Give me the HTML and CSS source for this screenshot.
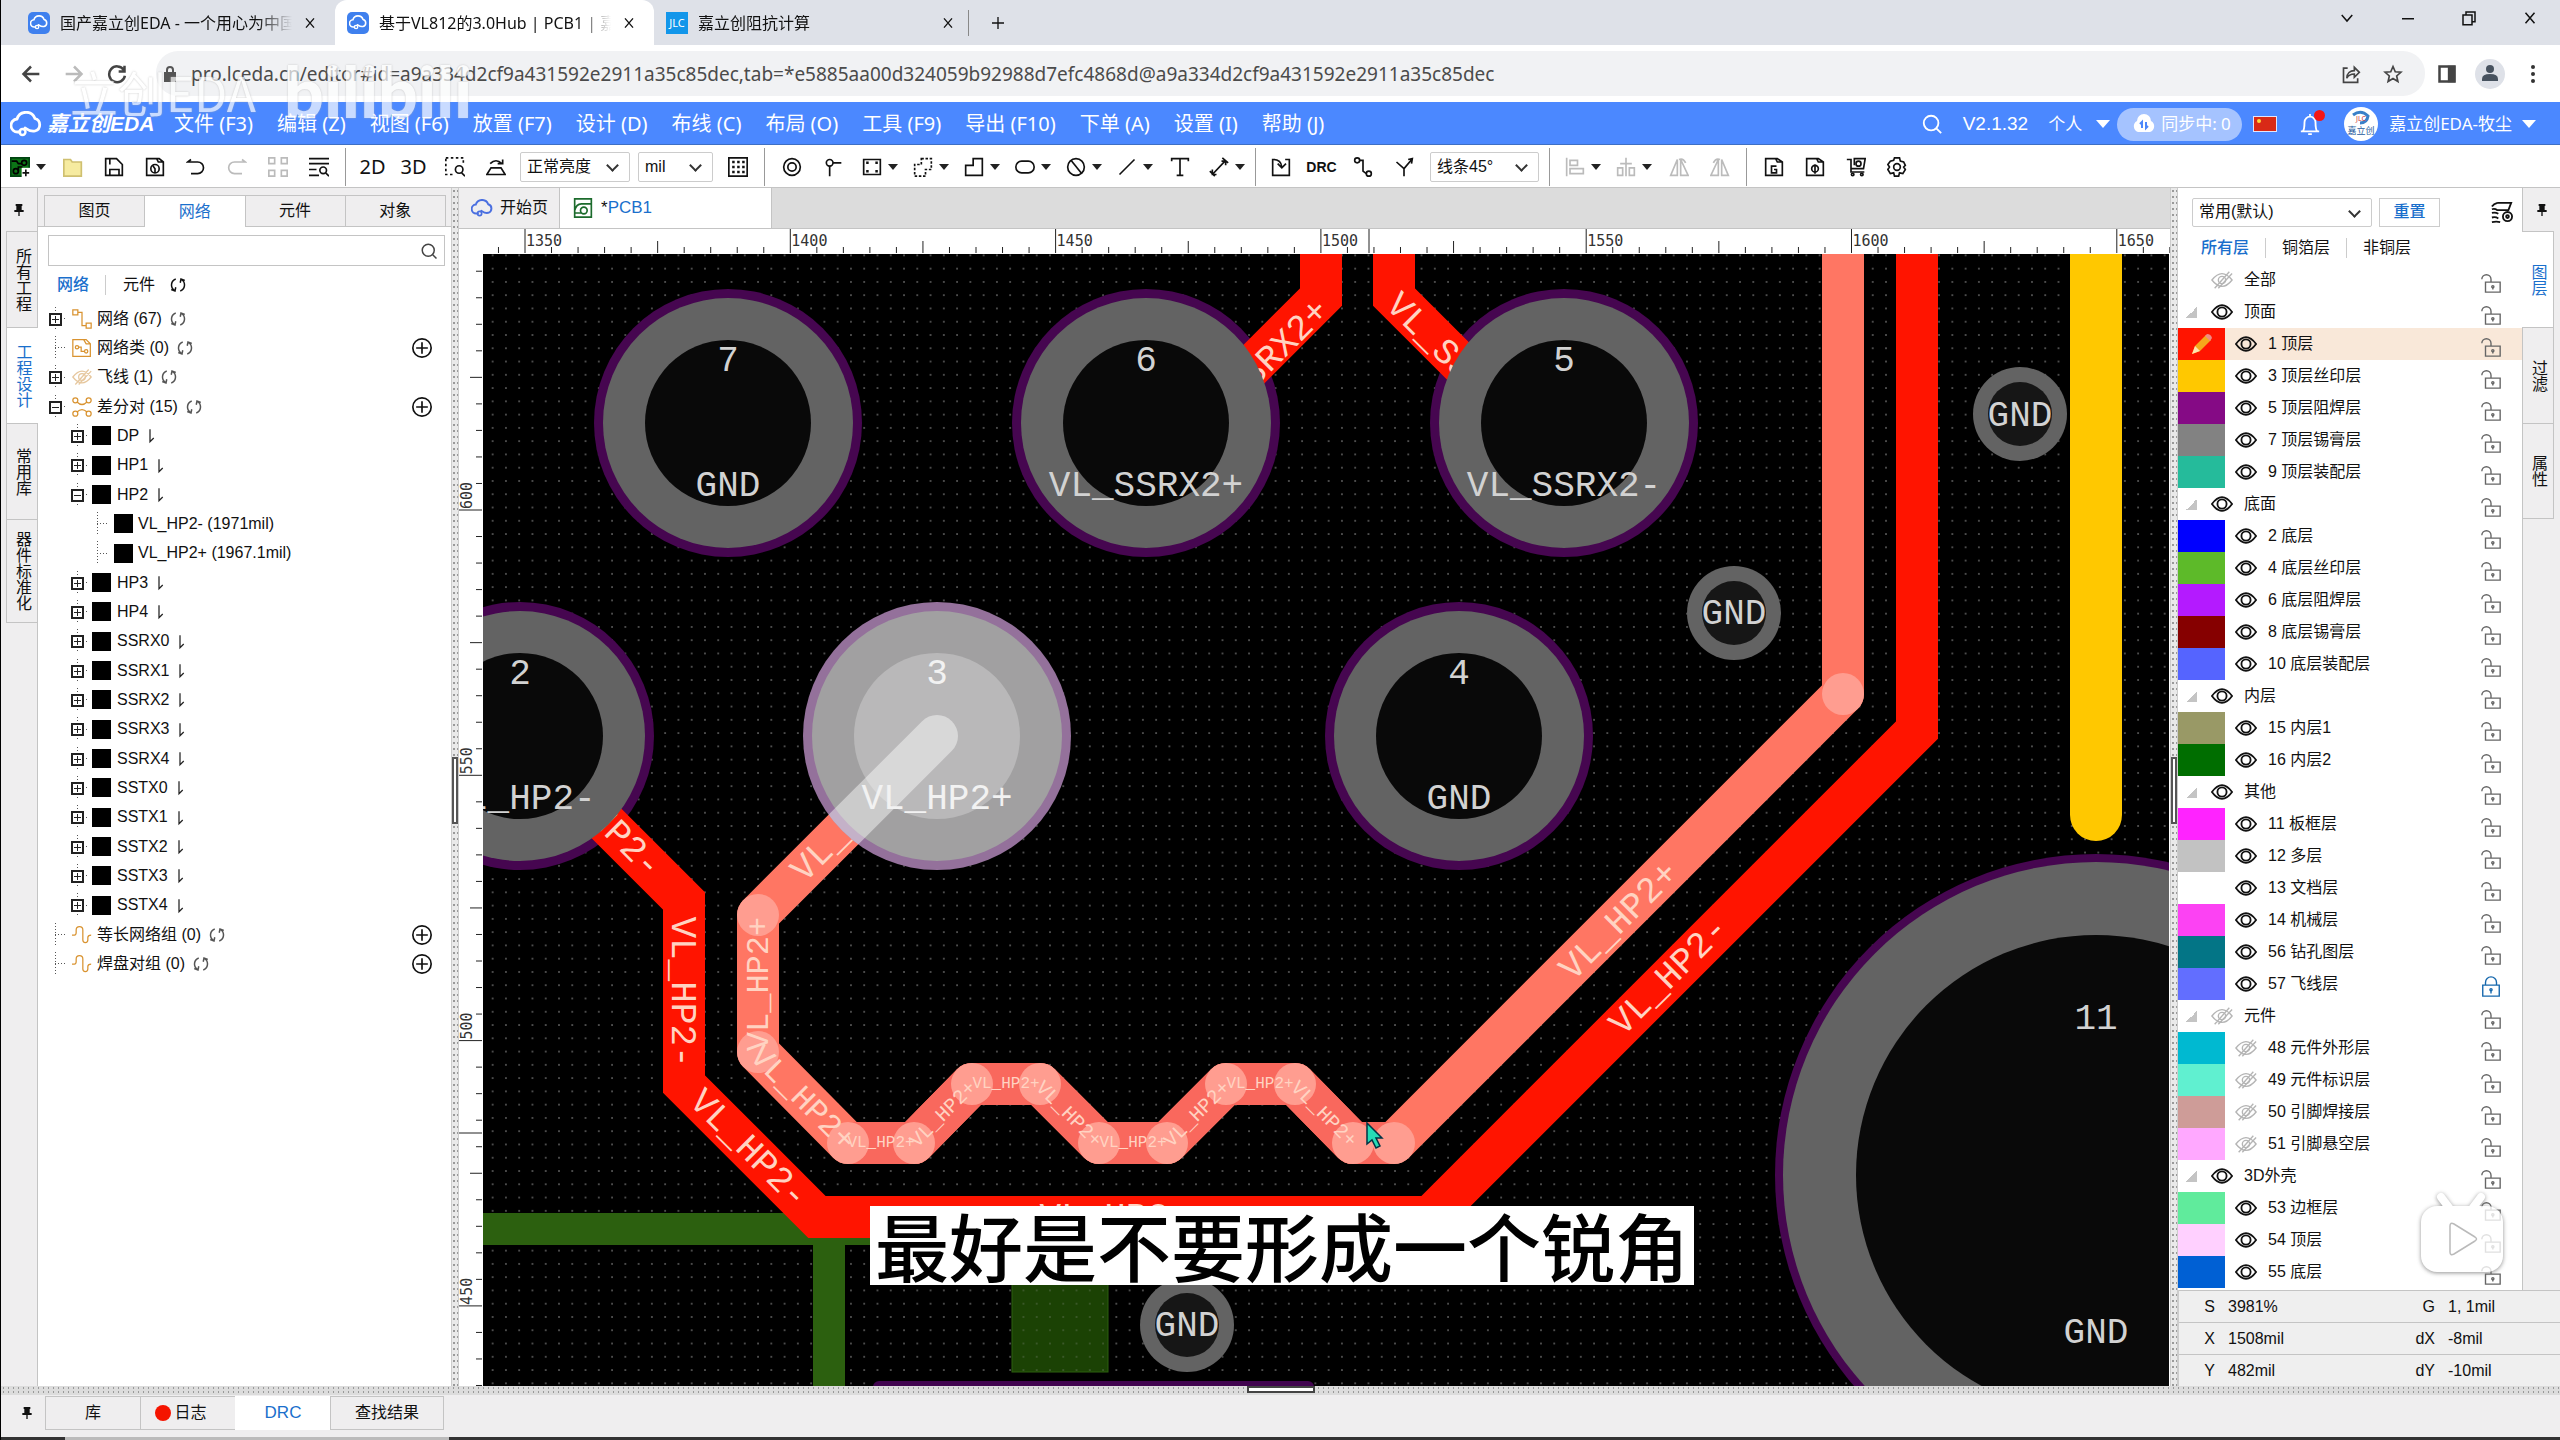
FILE: index.html
```html
<!DOCTYPE html>
<html lang="zh-CN">
<head>
<meta charset="utf-8">
<title>基于VL812的3.0Hub | PCB1 | 嘉立创EDA</title>
<link rel="stylesheet" href="styles.css">
</head>
<body>
<svg class="defs" aria-hidden="true">
  <symbol id="cloud" viewBox="0 0 32 26"><path d="M10 21H8A6.500 6.500 0 0 1 7 8a9.500 9.500 0 0 1 18-.5A6.500 6.500 0 0 1 25 20c-5 1-7-1-10-3" fill="none" stroke="currentColor" stroke-width="2.800" stroke-linecap="round"/><circle cx="12.500" cy="21" r="3" fill="none" stroke="currentColor" stroke-width="2.400"/></symbol>
  <symbol id="x" viewBox="0 0 24 24"><path d="M6 5l12 14M18 5L6 19"/></symbol>
  <symbol id="plus" viewBox="0 0 24 24"><path d="M12 3v18M3 12h18"/></symbol>
  <symbol id="back" viewBox="0 0 24 24"><path d="M22 12H4M12 3l-9 9 9 9"/></symbol>
  <symbol id="reload" viewBox="0 0 24 24"><path d="M20 7a9.500 9.500 0 1 0 1.500 7M21 2v7h-7"/></symbol>
  <symbol id="chev" viewBox="0 0 24 24"><path d="M5 8l7 8 7-8"/></symbol>
  <symbol id="min" viewBox="0 0 24 24"><path d="M4 13h16"/></symbol>
  <symbol id="restore" viewBox="0 0 24 24"><path d="M4 8h12v13H4zM8 8V4h12v13h-4"/></symbol>
  <symbol id="share" viewBox="0 0 24 24"><path d="M8 5H3v17h17v-5M7 17c0-6 4-9 9-9V4l6 6-6 6v-4c-4 0-7 1-9 5z"/></symbol>
  <symbol id="star" viewBox="0 0 24 24"><path d="M12 3l2.700 6.300 6.800.6-5.100 4.500 1.500 6.700L12 17.500 6.100 21.100l1.500-6.700L2.500 9.900l6.800-.6z"/></symbol>
  <symbol id="side" viewBox="0 0 24 24"><path d="M3 3h18v18H3z" stroke-width="3"/><path d="M14 3h7v18h-7z" fill="currentColor"/></symbol>
  <symbol id="search" viewBox="0 0 24 24"><circle cx="11" cy="11" r="8"/><path d="M17 17l5 5"/></symbol>
  <symbol id="sync" viewBox="0 0 24 24"><path d="M9 4a8.500 8.500 0 0 0-2 15M3 18l5 2 1-5M15 20a8.500 8.500 0 0 0 2-15M21 6l-5-2-1 5"/></symbol>
  <symbol id="add" viewBox="0 0 24 24"><circle cx="12" cy="12" r="11"/><path d="M12 5v14M5 12h14"/></symbol>
  <symbol id="pin" viewBox="0 0 24 24"><path d="M7 3h10v3h-1v6h3v3h-6v6h-2v-6H5v-3h3V6H7z" fill="currentColor" stroke="none"/></symbol>
  <symbol id="eye" viewBox="0 0 24 24"><path d="M1 12q11-15 22 0q-11 15-22 0z"/><circle cx="12" cy="12" r="5"/></symbol>
  <symbol id="eyeoff" viewBox="0 0 24 24"><path d="M1 12q11-14 22 0q-11 14-22 0zM20 3L4 21M23 5L8 21"/><circle cx="12" cy="12" r="4"/></symbol>
  <symbol id="unlock" viewBox="0 0 24 24"><path d="M6 11h16v11H6zM2 8a5 5 0 0 1 10 0v3"/><circle cx="14" cy="16" r="1.200"/><path d="M14 16v3"/></symbol>
  <symbol id="lock" viewBox="0 0 24 24"><path d="M3 10h18v12H3zM6 10V7a6 6 0 0 1 12 0v3"/><circle cx="12" cy="15" r="1.200"/><path d="M12 15v4"/></symbol>
  <symbol id="down" viewBox="0 0 24 24"><path d="M8 2v20l6-6"/></symbol>
  <symbol id="net" viewBox="0 0 24 24"><path d="M1 1h6v6H1zM17 17h6v6h-6zM7 4h5v16h5"/></symbol>
  <symbol id="netclass" viewBox="0 0 24 24"><path d="M1 22V2h16l5 5v15zM14 2l3 5h5M8 11h3v5h4"/><circle cx="6" cy="11" r="2"/><circle cx="17" cy="16" r="2"/></symbol>
  <symbol id="pair" viewBox="0 0 24 24"><circle cx="4" cy="4" r="3"/><circle cx="20" cy="4" r="3"/><circle cx="4" cy="20" r="3"/><circle cx="20" cy="20" r="3"/><path d="M6 6q6 6 12 0M6 18q6-6 12 0"/></symbol>
  <symbol id="wave" viewBox="0 0 24 24"><path d="M0 12h3q2 0 2-3V6a4 4 0 0 1 8 0v12a3 3 0 0 0 6 0v-3q0-3 4-3"/></symbol>
  <symbol id="pcbnew" viewBox="0 0 24 24"><path d="M1 1h22v22H1z" fill="#0c7416" stroke="#041"/><g stroke="#000"><circle cx="17" cy="7" r="3"/><circle cx="7" cy="17" r="3"/><path d="M2 5h6l2 3h4M10 17v-5h5"/></g><path d="M14 13h10v11H14z" fill="#fff" stroke="none"/><path d="M19 15v8M15 19h8" stroke="#111"/></symbol>
  <symbol id="folder" viewBox="0 0 24 24"><path d="M1 23V3h8l2 3h11v17z" fill="#f6eba0" stroke="#cfc070"/></symbol>
  <symbol id="save" viewBox="0 0 24 24"><path d="M2 2h13l7 7v13H2zM7 2v7M7 22v-7h11v7"/></symbol>
  <symbol id="hist" viewBox="0 0 24 24"><path d="M2 22V2h15l5 4v16zM14 2l2 4h6"/><circle cx="12" cy="14" r="5"/><path d="M9 10l3 4v5"/></symbol>
  <symbol id="undo" viewBox="0 0 24 24"><path d="M6 3L2 6h12a7 7 0 0 1 0 14H6"/></symbol>
  <symbol id="redo" viewBox="0 0 24 24"><path d="M18 3l4 3H9a7 7 0 0 0 0 14h9"/></symbol>
  <symbol id="four" viewBox="0 0 24 24"><path d="M1 1h7v7H1zM16 1h7v7h-7zM1 16h7v7H1zM16 16h7v7h-7z"/></symbol>
  <symbol id="list" viewBox="0 0 24 24"><path d="M0 2h24M0 8h24M0 15h9M0 22h12"/><circle cx="17" cy="16" r="4"/><path d="M20 19l4 4"/></symbol>
  <symbol id="zone" viewBox="0 0 24 24"><path d="M1 1h21v20H1z" stroke-dasharray="3 3"/><path d="M11 9h13v15H11z" fill="#fff" stroke="none"/><circle cx="17" cy="15" r="4.500"/><path d="M20 19l4 4"/></symbol>
  <symbol id="flip" viewBox="0 0 24 24"><path d="M6 13h12l5 8H1zM5 8q7-7 14 0M14 8h6V3"/></symbol>
  <symbol id="grid" viewBox="0 0 24 24"><path d="M1 1h22v22H1z"/><path d="M5 6h15M5 12h15M5 18h15" stroke-dasharray="3 3" stroke-width="3"/></symbol>
  <symbol id="via" viewBox="0 0 24 24"><circle cx="12" cy="12" r="10"/><circle cx="12" cy="12" r="5"/></symbol>
  <symbol id="padi" viewBox="0 0 24 24"><circle cx="8" cy="7" r="4"/><path d="M12 7h10M8 11v12"/></symbol>
  <symbol id="rect" viewBox="0 0 24 24"><path d="M2 3h20v18H2z"/><path d="M5 7h3M16 7h3M5 17h3M16 17h3" stroke-width="3"/></symbol>
  <symbol id="dash" viewBox="0 0 24 24"><path d="M10 2h12v13h-7v8H2V9h8z" stroke-dasharray="3 2"/></symbol>
  <symbol id="poly" viewBox="0 0 24 24"><path d="M11 2h11v20H2V10h9z"/></symbol>
  <symbol id="round" viewBox="0 0 24 24"><rect x="1" y="5" width="22" height="14" rx="7"/></symbol>
  <symbol id="ban" viewBox="0 0 24 24"><circle cx="12" cy="12" r="10"/><path d="M6 4l13 16"/></symbol>
  <symbol id="line" viewBox="0 0 24 24"><path d="M21 3L3 21"/></symbol>
  <symbol id="text" viewBox="0 0 24 24"><path d="M2 5V2h20v3M12 2v20M8 22h8"/></symbol>
  <symbol id="dim" viewBox="0 0 24 24"><path d="M4 21L20 4M1 17l6 6M16 1l7 6M15 5h5v5M4 15v6h5"/></symbol>
  <symbol id="import" viewBox="0 0 24 24"><path d="M5 3H2v19h20V3h-5M3 3q9 0 10 9M8 8l5 5 5-5"/></symbol>
  <symbol id="route" viewBox="0 0 24 24"><circle cx="5" cy="4" r="3"/><circle cx="19" cy="20" r="3"/><path d="M8 4h4v13l4 3"/></symbol>
  <symbol id="split" viewBox="0 0 24 24"><path d="M12 23v-9L22 2M12 14L3 6M17 3l5-1-1 6"/></symbol>
  <symbol id="align" viewBox="0 0 24 24"><path d="M2 1v22M6 4h9v6H6zM6 14h16v6H6z"/></symbol>
  <symbol id="dist" viewBox="0 0 24 24"><path d="M12 1v22M2 13h6v9H2zM16 13h6v9h-6zM5 8h14"/></symbol>
  <symbol id="mir" viewBox="0 0 24 24"><path d="M2 22h8V3zM14 3l9 19h-9zM12 3q5-2 8 4"/></symbol>
  <symbol id="gfile" viewBox="0 0 24 24"><path d="M2 22V2h14l6 4v16zM14 2l2 4h6M15 11H9v8h6v-4h-3"/></symbol>
  <symbol id="pfile" viewBox="0 0 24 24"><path d="M2 22V2h14l6 4v16zM14 2l2 4h6M12 9v11"/><circle cx="12" cy="14" r="4"/></symbol>
  <symbol id="cart" viewBox="0 0 24 24"><path d="M1 3h5v15h16M6 14h15l2-12H10v8"/><circle cx="15" cy="8" r="3"/><circle cx="8" cy="21" r="1.500"/><circle cx="19" cy="21" r="1.500"/></symbol>
  <symbol id="gear" viewBox="0 0 24 24"><path d="M9 1h6l1 4 4 1 2 4-2 2 2 3-3 5-4-1-1 4h-5l-1-4-4 1-3-5 2-3-2-3 3-4 4-1z"/><circle cx="12" cy="12" r="4"/></symbol>
  <symbol id="manage" viewBox="0 0 24 24"><path d="M7 2h15l-3 8H7q-3-2-6-1M7 2Q3 3 1 6M1 13q4-1 7 1M1 18q4-1 7 1M1 23q5-1 9 0"/><circle cx="18" cy="17" r="5"/><circle cx="18" cy="17" r="1.500"/></symbol>
  <symbol id="bell" viewBox="0 0 24 24"><path d="M2 20h20M4 20q2-2 2-10a6 6 0 0 1 12 0q0 8 2 10M12 1v3M10 23h4"/></symbol>
  <symbol id="board" viewBox="0 0 24 24"><path d="M2 1h20v22H2zM2 15q2-8 8-8h12M2 18h8"/><circle cx="13" cy="15" r="4"/></symbol>
</svg>

<div class="tabstrip">
  <div class="btab"><span class="fav"><svg class="mini"><use href="#cloud"/></svg></span><span class="btitle">国产嘉立创EDA - 一个用心为中国</span><button class="plain" aria-label="关闭"><svg class="ic s16"><use href="#x"/></svg></button></div>
  <div class="btab on"><span class="fav"><svg class="mini"><use href="#cloud"/></svg></span><span class="btitle">基于VL812的3.0Hub | PCB1 | 嘉</span><button class="plain" aria-label="关闭"><svg class="ic s16"><use href="#x"/></svg></button></div>
  <div class="btab last"><span class="fav jlc">JLC</span><span class="btitle">嘉立创阻抗计算</span><button class="plain" aria-label="关闭"><svg class="ic s16"><use href="#x"/></svg></button></div>
  <button class="plain newtab" aria-label="新标签页"><svg class="ic s16"><use href="#plus"/></svg></button>
  <div class="winctl">
    <button class="plain" aria-label="搜索标签页"><svg class="ic s18"><use href="#chev"/></svg></button>
    <button class="plain" aria-label="最小化"><svg class="ic s18"><use href="#min"/></svg></button>
    <button class="plain" aria-label="还原"><svg class="ic s18"><use href="#restore"/></svg></button>
    <button class="plain" aria-label="关闭窗口"><svg class="ic s18"><use href="#x"/></svg></button>
  </div>
</div>

<div class="address">
  <button class="plain nav" aria-label="后退"><svg class="ic s20 bold"><use href="#back"/></svg></button>
  <button class="plain nav dim" aria-label="前进"><svg class="ic s20 bold mirror"><use href="#back"/></svg></button>
  <button class="plain nav" aria-label="刷新"><svg class="ic s20 bold"><use href="#reload"/></svg></button>
  <div class="omnibox">
    <svg class="padlock" viewBox="0 0 12 16"><path d="M0 6h12v10H0z"/><path d="M3 7V4a3 3 0 0 1 6 0v3" fill="none" stroke="#555" stroke-width="2"/></svg>
    <input type="text" aria-label="地址" value="pro.lceda.cn/editor#id=a9a334d2cf9a431592e2911a35c85dec,tab=*e5885aa00d324059b92988d7efc4868d@a9a334d2cf9a431592e2911a35c85dec">
    <button class="plain" aria-label="分享"><svg class="ic s20"><use href="#share"/></svg></button>
    <button class="plain" aria-label="收藏"><svg class="ic s20"><use href="#star"/></svg></button>
  </div>
  <button class="plain tail" aria-label="侧边栏"><svg class="ic s20"><use href="#side"/></svg></button>
  <button class="plain tail" aria-label="个人资料"><svg class="profile" viewBox="0 0 30 30"><circle cx="15" cy="15" r="15" fill="#dee1e8"/><circle cx="15" cy="10" r="4" fill="#47525f"/><path d="M7 22v-2q0-5 8-5t8 5v2z" fill="#47525f"/></svg></button>
  <button class="plain tail" aria-label="更多"><svg class="dots" viewBox="0 0 6 20"><circle cx="3" cy="3" r="2"/><circle cx="3" cy="10" r="2"/><circle cx="3" cy="17" r="2"/></svg></button>
  <div class="mark" aria-hidden="true"><span>立创EDA</span><b>bilibili</b></div>
</div>

<header class="menubar">
  <a class="logo" href="#"><svg class="logoic"><use href="#cloud"/></svg>嘉立创EDA</a>
  <nav class="menus">
    <button>文件 (F3)</button><button>编辑 (Z)</button><button>视图 (F6)</button><button>放置 (F7)</button><button>设计 (D)</button><button>布线 (C)</button><button>布局 (O)</button><button>工具 (F9)</button><button>导出 (F10)</button><button>下单 (A)</button><button>设置 (I)</button><button>帮助 (J)</button>
  </nav>
  <div class="account">
    <button aria-label="搜索"><svg class="ic s22"><use href="#search"/></svg></button>
    <span class="ver">V2.1.32</span>
    <button class="who">个人<i class="tri"></i></button>
    <button class="pill"><svg class="syncic" viewBox="0 0 24 20"><path d="M6 18a6 6 0 0 1-1-11 7 7 0 0 1 14 0 6 6 0 0 1-1 11z" fill="#fff"/><path d="M10 14V8l-2 2M14 8v6l2-2" fill="none" stroke="#4b87fb" stroke-width="2"/></svg>同步中: 0</button>
    <button class="flag" aria-label="语言"><svg viewBox="0 0 24 16"><path d="M0 0h24v16H0z" fill="#dfe6ff"/><path d="M1 1h22v14H1z" fill="#d92a17"/><circle cx="6" cy="5" r="2" fill="#ffd83b"/></svg></button>
    <button class="bell" aria-label="通知"><svg class="ic s22"><use href="#bell"/></svg></button>
    <button class="user"><svg class="avatar" viewBox="0 0 36 36"><circle cx="18" cy="18" r="17" fill="#fff"/><path d="M10 9q8-6 15 1-1 7-8 7" fill="none" stroke="#3a80c8" stroke-width="3"/><text x="18" y="15" font-size="7" fill="#c33" text-anchor="middle">JLC</text><text x="18" y="28" font-size="9" fill="#245a9c" text-anchor="middle">嘉立创</text></svg>嘉立创EDA-牧尘<i class="tri"></i></button>
  </div>
</header>

<div class="toolbar" role="toolbar">
  <button class="dd" aria-label="新建"><svg class="ic s20"><use href="#pcbnew"/></svg></button>
  <button aria-label="打开"><svg class="ic s20"><use href="#folder"/></svg></button>
  <button aria-label="保存"><svg class="ic s20"><use href="#save"/></svg></button>
  <button aria-label="历史"><svg class="ic s20"><use href="#hist"/></svg></button>
  <button aria-label="撤销"><svg class="ic s20"><use href="#undo"/></svg></button>
  <button class="off" aria-label="重做"><svg class="ic s20"><use href="#redo"/></svg></button>
  <button class="off" aria-label="阵列"><svg class="ic s20"><use href="#four"/></svg></button>
  <button aria-label="查找"><svg class="ic s20"><use href="#list"/></svg></button>
  <i class="sep"></i>
  <button>2D</button><button>3D</button>
  <button aria-label="框选"><svg class="ic s20"><use href="#zone"/></svg></button>
  <button aria-label="翻转"><svg class="ic s20"><use href="#flip"/></svg></button>
  <span class="pick bright"><select aria-label="亮度"><option>正常亮度</option></select></span>
  <span class="pick unit"><select aria-label="单位"><option>mil</option></select></span>
  <button aria-label="网格"><svg class="ic s20"><use href="#grid"/></svg></button>
  <i class="sep"></i>
  <button aria-label="过孔"><svg class="ic s20"><use href="#via"/></svg></button>
  <button aria-label="焊盘"><svg class="ic s20"><use href="#padi"/></svg></button>
  <button class="dd" aria-label="矩形"><svg class="ic s20"><use href="#rect"/></svg></button>
  <button class="dd" aria-label="区域"><svg class="ic s20"><use href="#dash"/></svg></button>
  <button class="dd" aria-label="铺铜"><svg class="ic s20"><use href="#poly"/></svg></button>
  <button class="dd" aria-label="槽"><svg class="ic s20"><use href="#round"/></svg></button>
  <button class="dd" aria-label="禁止区域"><svg class="ic s20"><use href="#ban"/></svg></button>
  <button class="dd" aria-label="线条"><svg class="ic s20"><use href="#line"/></svg></button>
  <button aria-label="文本"><svg class="ic s20"><use href="#text"/></svg></button>
  <button class="dd" aria-label="尺寸"><svg class="ic s20"><use href="#dim"/></svg></button>
  <i class="sep tight"></i>
  <button aria-label="导入"><svg class="ic s20"><use href="#import"/></svg></button>
  <button class="drc">DRC</button>
  <button aria-label="布线"><svg class="ic s20"><use href="#route"/></svg></button>
  <button aria-label="分支"><svg class="ic s20"><use href="#split"/></svg></button>
  <span class="pick angle"><select aria-label="拐角"><option>线条45°</option></select></span>
  <i class="sep"></i>
  <button class="dd off" aria-label="对齐"><svg class="ic s20"><use href="#align"/></svg></button>
  <button class="dd off" aria-label="分布"><svg class="ic s20"><use href="#dist"/></svg></button>
  <button class="off" aria-label="左右镜像"><svg class="ic s20"><use href="#mir"/></svg></button>
  <button class="off" aria-label="上下镜像"><svg class="ic s20 mirror"><use href="#mir"/></svg></button>
  <i class="sep"></i>
  <button aria-label="Gerber"><svg class="ic s20"><use href="#gfile"/></svg></button>
  <button aria-label="坐标文件"><svg class="ic s20"><use href="#pfile"/></svg></button>
  <button aria-label="下单"><svg class="ic s20"><use href="#cart"/></svg></button>
  <button aria-label="设置"><svg class="ic s20"><use href="#gear"/></svg></button>
</div>

<main class="work">
  <nav class="rail">
    <button class="pinbtn" aria-label="固定"><svg class="ic s16"><use href="#pin"/></svg></button>
    <button>所有工程</button><button class="on">工程设计</button><button>常用库</button><button class="tall">器件标准化</button>
  </nav>
  <aside class="left">
    <div class="ptabs"><button>图页</button><button class="on">网络</button><button>元件</button><button>对象</button></div>
    <div class="find"><input type="search" aria-label="搜索网络"><svg class="ic s18"><use href="#search"/></svg></div>
    <div class="sub"><button class="on">网络</button><button>元件</button><button class="re" aria-label="刷新"><svg class="ic s18"><use href="#sync"/></svg></button></div>
    <ul class="tree" id="tree"></ul>
  </aside>
  <div class="split"><i></i></div>
  <section class="editor">
    <div class="etabs"><button class="home"><svg class="homeic"><use href="#cloud"/></svg>开始页</button><button class="on"><svg class="ic s20 green"><use href="#board"/></svg><span>*</span>PCB1</button></div>
    <svg class="hruler" id="hruler"></svg>
    <svg class="vruler" id="vruler"></svg>
    <div class="stage">
      <svg class="canvas" role="img" aria-label="PCB1">
        <defs>
          <pattern id="dots" patternUnits="userSpaceOnUse" x="486" y="262" width="13.270" height="13.270"><rect x="6" y="6" width="1.300" height="1.300" fill="#a0a0a0"/></pattern>
          <clipPath id="pad3"><circle cx="937" cy="736" r="134"/></clipPath>
        </defs>
        <g transform="translate(-483 -254)">
          <rect x="483" y="254" width="4000" height="3000" fill="#000"/>
          <rect x="483" y="254" width="4000" height="3000" fill="url(#dots)"/>
          <path d="M483 1229H1000M829 1229V3000" stroke="#2c600f" stroke-width="32" fill="none"/>
          <rect x="1012" y="1240" width="96" height="132" fill="#1b4204" stroke="#2c600f"/>
          <rect x="1012" y="1240" width="96" height="132" fill="url(#dots)" opacity=".5"/>
          <rect x="873" y="1381" width="441" height="60" rx="6" fill="#41044f"/>
          <g fill="#460650"><circle cx="728" cy="423" r="134"/><circle cx="1146" cy="423" r="134"/><circle cx="1564" cy="423" r="134"/><circle cx="520" cy="736" r="134"/><circle cx="1459" cy="736" r="134"/><circle cx="2096" cy="1175" r="321"/></g>
          <path d="M2096 200V815" stroke="#ffc800" stroke-width="52" stroke-linecap="round"/>
          <g fill="none" stroke="#ff1400" stroke-width="42">
            <path d="M1917 200V730L1430 1217H817L684 1084V901L520 737"/>
            <path d="M1321 200V297L1200 418M1394 200V297L1520 423"/>
          </g>
          <path d="M937 736L758 915V1052L848 1143H914L972 1084H1040L1099 1143H1167L1226 1084H1295L1353 1143H1394L1843 694V200" fill="none" stroke="#ff7663" stroke-width="42" stroke-linejoin="round"/>
          <path d="M848 1143H914L972 1084H1040L1099 1143H1167L1226 1084H1295L1353 1143H1394" fill="none" stroke="#f9685d" stroke-width="42" stroke-linejoin="round"/>
          <g fill="#ff9d90"><circle cx="758" cy="915" r="21"/><circle cx="758" cy="1052" r="21"/><circle cx="848" cy="1143" r="21"/><circle cx="914" cy="1143" r="21"/><circle cx="972" cy="1084" r="21"/><circle cx="1040" cy="1084" r="21"/><circle cx="1099" cy="1143" r="21"/><circle cx="1167" cy="1143" r="21"/><circle cx="1226" cy="1084" r="21"/><circle cx="1295" cy="1084" r="21"/><circle cx="1353" cy="1143" r="21"/><circle cx="1394" cy="1143" r="21"/><circle cx="1843" cy="694" r="21"/></g>
          <g class="net n36">
            <text transform="translate(1322 304) rotate(-45)" text-anchor="end" dy="12">VL_SSRX2+</text>
            <text transform="translate(1393 298) rotate(45)" dy="12">VL_SSRX2-</text>
            <text transform="translate(657 871) rotate(45)" text-anchor="end" dy="12">VL_HP2-</text>
            <text transform="translate(684 992) rotate(90)" text-anchor="middle" dy="12">VL_HP2-</text>
            <text transform="translate(750 1148) rotate(45)" text-anchor="middle" dy="12">VL_HP2-</text>
            <text x="1115" y="1228" text-anchor="middle">VL_HP2-</text>
            <text transform="translate(1668 975) rotate(-45)" text-anchor="middle" dy="12">VL_HP2-</text>
            <text transform="translate(1618 920) rotate(-45)" text-anchor="middle" dy="12">VL_HP2+</text>
            <text transform="translate(796 875) rotate(-45)" dy="12">VL_HP2+</text>
          </g>
          <g class="net n32"><text transform="translate(757 984) rotate(-90)" text-anchor="middle" dy="11">VL_HP2+</text><text transform="translate(803 1098) rotate(45)" text-anchor="middle" dy="10">VL_HP2+</text></g>
          <g class="net n20" text-anchor="middle"><text transform="translate(943 1114) rotate(-45)" dy="6">VL_HP2+</text><text transform="translate(1069 1114) rotate(45)" dy="6">VL_HP2+</text><text transform="translate(1197 1114) rotate(-45)" dy="6">VL_HP2+</text><text transform="translate(1324 1114) rotate(45)" dy="6">VL_HP2+</text></g>
          <g class="net n16" text-anchor="middle"><text x="881" y="1147">VL_HP2+</text><text x="1006" y="1088">VL_HP2+</text><text x="1133" y="1147">VL_HP2+</text><text x="1260" y="1088">VL_HP2+</text></g>
          <g fill="#636363"><circle cx="728" cy="423" r="125"/><circle cx="1146" cy="423" r="125"/><circle cx="1564" cy="423" r="125"/><circle cx="520" cy="736" r="125"/><circle cx="1459" cy="736" r="125"/><circle cx="2096" cy="1175" r="313"/><circle cx="2020" cy="414" r="47"/><circle cx="1734" cy="613" r="47"/><circle cx="1187" cy="1325" r="47"/></g>
          <g fill="#090909"><circle cx="728" cy="423" r="83"/><circle cx="1146" cy="423" r="83"/><circle cx="1564" cy="423" r="83"/><circle cx="520" cy="736" r="83"/><circle cx="1459" cy="736" r="83"/><circle cx="2096" cy="1175" r="240"/></g>
          <g fill="#161616"><circle cx="2020" cy="414" r="32"/><circle cx="1734" cy="613" r="32"/><circle cx="1187" cy="1325" r="32"/></g>
          <circle cx="937" cy="736" r="134" fill="#94719b"/><circle cx="937" cy="736" r="125" fill="#a1a0a1"/><circle cx="937" cy="736" r="83" fill="#b9b8b9"/>
          <path d="M937 736L810 863" stroke="#fff" stroke-opacity=".45" stroke-width="42" stroke-linecap="round" clip-path="url(#pad3)"/>
          <g class="net pad n36" text-anchor="middle">
            <text x="728" y="371">7</text><text x="728" y="496">GND</text><text x="1146" y="371">6</text><text x="1146" y="496">VL_SSRX2+</text><text x="1564" y="371">5</text><text x="1564" y="496">VL_SSRX2-</text>
            <text x="520" y="684">2</text><text x="520" y="809">VL_HP2-</text><text class="hot" x="937" y="684">3</text><text class="hot" x="937" y="809">VL_HP2+</text><text x="1459" y="684">4</text><text x="1459" y="809">GND</text>
            <text x="2096" y="1029">11</text><text x="2096" y="1343">GND</text><text x="2020" y="426">GND</text><text x="1734" y="624">GND</text><text x="1187" y="1336">GND</text>
          </g>
          <path d="M1367 1123v21l5-4 4 8 4-2-4-8h6z" fill="#27dcb6" stroke="#034" stroke-width="1.500"/>
        </g>
      </svg>
      <p class="caption">最好是不要形成一个锐角</p>
    </div>
  </section>
  <div class="split right"><i></i></div>
  <aside class="layers">
    <div class="lhead"><span class="pick preset"><select aria-label="图层方案"><option>常用(默认)</option></select></span><button class="reset">重置</button><button class="plain mgr" aria-label="图层管理器"><svg class="ic s22"><use href="#manage"/></svg></button></div>
    <div class="ltabs"><button class="on">所有层</button><button>铜箔层</button><button>非铜层</button></div>
    <ul class="llist" id="layer-list"></ul>
  </aside>
  <nav class="rail rr">
    <button class="pinbtn" aria-label="固定"><svg class="ic s16"><use href="#pin"/></svg></button>
    <button class="on">图层</button><button>过滤</button><button>属性</button>
  </nav>
  <dl class="status">
    <div><dt>S</dt><dd>3981%</dd><dt>G</dt><dd>1, 1mil</dd></div>
    <div><dt>X</dt><dd>1508mil</dd><dt>dX</dt><dd>-8mil</dd></div>
    <div><dt>Y</dt><dd>482mil</dd><dt>dY</dt><dd>-10mil</dd></div>
  </dl>
  <svg class="tv" viewBox="0 0 90 84" aria-hidden="true"><g fill="#fff"><path d="M24 5l9 12M64 5l-9 12" stroke="#fff" stroke-width="8" stroke-linecap="round"/><rect x="4" y="14" width="82" height="66" rx="16"/></g><path d="M33 34q0-4 4-2l21 13q3 2 0 4L37 62q-4 2-4-2z" class="play"/></svg>
</main>

<div class="hsplit"><i></i></div>
<footer class="bottom">
  <button class="pinbtn" aria-label="固定"><svg class="ic s16"><use href="#pin"/></svg></button>
  <button>库</button><button class="log"><i></i>日志</button><button class="on">DRC</button><button class="wide">查找结果</button>
</footer>
<div class="edge"></div>
<script src="script.js"></script>
</body>
</html>
```
FILE: styles.css
```css
* { box-sizing: border-box; }
body {
  margin: 0;
  min-height: 100vh;
  display: flex;
  flex-direction: column;
  overflow: hidden;
  background: #efeeef;
  border-left: 1px solid #000;
  color: #111;
  font: 16px/20px "Liberation Sans", "Noto Sans CJK SC", sans-serif;
}
button, input, select { font: inherit; color: inherit; }
button { border: 0; padding: 0; background: none; white-space: nowrap; }
ul, dl, dd, p { margin: 0; padding: 0; list-style: none; }
.defs { position: absolute; width: 0; height: 0; }
.ic { display: block; flex: none; fill: none; stroke: currentColor; stroke-width: 2; overflow: visible; }
.s16 { width: 16px; height: 16px; }
.s18 { width: 18px; height: 18px; }
.s20 { width: 20px; height: 20px; }
.s22 { width: 22px; height: 22px; }
.bold { stroke-width: 3; }
.mirror { transform: scaleX(-1); }
.plain { display: flex; align-items: center; justify-content: center; }

/* browser chrome */
.tabstrip { display: flex; height: 45px; padding-left: 15px; background: #dee1e8; font-family: "Noto Sans", "Noto Sans CJK SC", sans-serif; }
.btab { display: flex; align-items: center; width: 319px; padding: 0 17px 0 12px; gap: 10px; border-radius: 12px 12px 0 0; }
.btab.on { background: #fff; }
.btab.last { position: relative; }
.btab.last::after { content: ""; position: absolute; right: 4px; top: 10px; height: 26px; border-right: 1px solid #888; }
.fav { display: grid; place-items: center; width: 22px; height: 22px; border-radius: 5px; background: #3f80ee; color: #fff; }
.fav.jlc { border-radius: 0; background: #1296ea; font-size: 11px; }
.mini { width: 18px; height: 15px; }
.btitle { flex: 1; overflow: hidden; white-space: nowrap; mask-image: linear-gradient(90deg, #000 85%, transparent); }
.btab .plain { width: 16px; }
.newtab { width: 50px; }
.winctl { display: flex; margin-left: auto; height: 36px; }
.winctl .plain { width: 61px; }
.address { position: relative; display: flex; align-items: center; height: 57px; padding-left: 8px; background: #fff; color: #444; }
.nav { width: 43px; }
.nav.dim { color: #bbb; }
.omnibox { flex: 1; display: flex; align-items: center; height: 45px; margin-left: 18px; padding: 0 24px 0 8px; border-radius: 22px; background: #f1f2f4; }
.padlock { width: 12px; height: 16px; fill: #555; }
.omnibox input { flex: 1; margin-left: 15px; padding: 0; border: 0; outline: 0; background: none; color: #4b4b4b; font: 19px/28px "Noto Sans", sans-serif; }
.omnibox .plain { width: 42px; }
.omnibox .plain:last-child { width: 28px; margin-left: 7px; margin-right: -6px; }
.tail { width: 43px; }
.tail:last-of-type { margin-right: 6px; }
.profile { width: 30px; height: 30px; }
.dots { width: 6px; height: 20px; fill: #333; }
.mark { position: absolute; left: 69px; top: 6px; display: flex; gap: 28px; z-index: 3; align-items: center; color: #fff; opacity: .7; font: 48px/80px "Noto Sans CJK SC", sans-serif; text-shadow: 0 0 2px #aaa; pointer-events: none; }
.mark b { font: 900 70px/80px Lato, sans-serif; }

/* menu bar */
.menubar { display: flex; align-items: center; height: 43px; padding: 2px 24px 0 9px; background: #4b88ff; border-bottom: 1px solid #3e6fc4; color: #fff; font: 20px/24px "Noto Sans", "Noto Sans CJK SC", sans-serif; }
.logo { display: flex; align-items: center; gap: 5px; width: 164px; color: #fff; text-decoration: none; font: italic bold 21px/24px "Liberation Sans", "Noto Sans CJK SC", sans-serif; }
.logoic { width: 32px; height: 26px; }
.menus { display: flex; gap: 24px; }
.account { display: flex; align-items: center; margin-left: auto; }
.ver { margin: 0 20px 0 20px; font: 19px/24px "Liberation Sans", sans-serif; }
.who { display: flex; align-items: center; gap: 14px; width: 69px; font-size: 17px; }
.tri { border: 7px solid transparent; border-top: 8px solid #fff; border-bottom: 0; }
.pill { display: flex; align-items: center; gap: 5px; width: 125px; height: 33px; padding-left: 15px; border-radius: 17px; background: #a5c3ff; font-size: 17px; }
.syncic { width: 24px; height: 20px; }
.flag { width: 24px; height: 16px; margin: 0 22px 0 11px; }
.flag svg { display: block; }
.bell { position: relative; margin-right: 22px; }
.bell::after { content: ""; position: absolute; right: -4px; top: -3px; width: 11px; height: 11px; border-radius: 50%; background: #f51616; }
.user { display: flex; align-items: center; font-size: 17px; gap: 10px; }
.avatar { width: 36px; height: 36px; }

/* toolbar */
.toolbar { display: flex; align-items: center; height: 43px; padding-top: 2px; background: #fff; border-bottom: 1px solid #c4c4c4; }
.toolbar button { display: flex; align-items: center; justify-content: center; width: 41px; height: 40px; flex: none; font: 20px/24px "Noto Sans", sans-serif; }
.toolbar .dd { width: 51px; justify-content: flex-start; padding-left: 9px; gap: 6px; }
.toolbar .dd::after { content: ""; border: 5px solid transparent; border-top: 6px solid #222; border-bottom: 0; }
.toolbar .off { color: #bbb; }
.toolbar .drc { font: bold 14px/20px "Liberation Sans", sans-serif; }
.sep { width: 13px; height: 38px; flex: none; background: linear-gradient(#999, #999) 6px 0 / 1px 100% no-repeat; }
.sep.tight { width: 9px; background-position-x: 4px; }
.pick { position: relative; display: block; height: 30px; }
.pick select { width: 100%; height: 100%; padding: 0 6px; appearance: none; border: 1px solid #ccc; border-radius: 2px; background: #fff; outline: 0; }
.pick::after { content: ""; position: absolute; right: 13px; top: 9px; width: 7px; height: 7px; border: solid #333; border-width: 0 2px 2px 0; transform: rotate(45deg); }
.bright { width: 110px; margin: 0 8px 0 4px; }
.unit { width: 75px; margin-right: 4px; }
.angle { width: 109px; margin: 0 4px 0 6px; }

/* work area */
.work { position: relative; flex: 1; display: grid; grid-template-columns: 37px 413px 8px minmax(0, 1fr) 8px 344px 38px; grid-template-rows: minmax(0, 1fr) auto; }
.rail, .left, .split, .editor { grid-row: 1 / 3; }
.rail { display: flex; flex-direction: column; align-items: flex-end; background: #efeeef; border-right: 1px solid #c4c4c4; }
.rail button { writing-mode: vertical-rl; width: 31px; height: 96px; border: 1px solid #c4c4c4; border-bottom: 0; border-right: 0; display: flex; align-items: center; justify-content: center; text-orientation: upright; }
.rail button:last-child { border-bottom: 1px solid #c4c4c4; }
.rail .tall { height: 104px; }
.rail .on, .ptabs .on, .bottom .on, .etabs .on { background: #fff; color: #1a6fcc; }
.rail button.on { width: 32px; margin-right: -1px; }
.rail .pinbtn, .bottom .pinbtn { border: 0; width: 37px; height: 43px; display: flex; align-items: center; justify-content: center; }
.rr { grid-column: 7; grid-row: 1; align-items: flex-start; border-right: 0; border-left: 1px solid #c4c4c4; }
.rr button { border-right: 1px solid #c4c4c4; border-left: 0; }
.rr button.on { margin: 0 0 0 -1px; }
.left { background: #fff; }
.ptabs { display: flex; height: 39px; padding: 7px 5px 0 6px; background: #efeeef; border-bottom: 1px solid #c4c4c4; }
.ptabs button { flex: 1; border: 1px solid #c4c4c4; border-width: 1px 0 0 1px; }
.ptabs button:last-child { border-right-width: 1px; }
.ptabs .on { height: 32px; }
.find { display: flex; align-items: center; height: 31px; margin: 8px 6px 0 10px; padding-right: 6px; border: 1px solid #c4c4c4; color: #444; }
.find input { flex: 1; height: 28px; border: 0; outline: 0; background: none; }
.sub { display: flex; align-items: center; height: 38px; padding-left: 19px; }
.sub button:nth-child(2) { margin-left: 16px; padding-left: 17px; border-left: 1px solid #ccc; }
.sub .re { margin-left: 14px; }
.sub .on, .ltabs .on, .reset { color: #1a6fcc; font-weight: 500; }
.tree { position: relative; }
.tree li { display: flex; align-items: center; height: 29px; padding-left: 11px; gap: 5px; white-space: nowrap; }
.tree li:nth-child(3n) { height: 30px; }
.tree .l1 { padding-left: 33px; gap: 6px; }
.tree .l2 { padding-left: 59px; }
.exp { position: relative; width: 18px; height: 100%; flex: none; background: repeating-linear-gradient(90deg, #555 0 1px, transparent 1px 3px) 6px 50% / 12px 1px no-repeat, repeating-linear-gradient(#555 0 1px, transparent 1px 3px) 6px 50% / 1px 24px no-repeat; }
.exp button { position: absolute; left: 0; top: calc(50% - 6px); width: 13px; height: 13px; border: 2px solid #222; background: linear-gradient(#222, #222) 50% / 7px 1px no-repeat #fff; }
.exp .plus { background: linear-gradient(#222, #222) 50% / 7px 1px no-repeat, linear-gradient(#222, #222) 50% / 1px 7px no-repeat #fff; }
.l1 .exp { margin-right: -3px; }
.l2 .exp { width: 12px; background-position: 0 50%; }
.tree .ti { color: #d99330; width: 20px; height: 20px; stroke-width: 1.5; }
.tree .ti.faint { color: #e6c79e; }
.sq { width: 19px; height: 19px; background: #000; flex: none; }
.tree .go { width: 15px; height: 17px; color: #222; }
.tree .rs { color: #555; margin-left: 2px; width: 18px; height: 18px; }
.tree .addb { margin: 0 19px 0 auto; }

.split { position: relative; background: radial-gradient(circle, #999 1px, transparent 1px) 0 0 / 4px 6px #e9e9e9; border: solid #ccc; border-width: 0 1px; }
.split i { position: absolute; inset: 0; top: calc(50% - 30px); height: 67px; border: 2px solid #555; background: #fff; }
.editor { display: grid; grid-template-columns: 24px minmax(0, 1fr); grid-template-rows: 41px 25px minmax(0, 1fr); background: #fff; }
.etabs { grid-column: 1 / 3; display: flex; background: #dcdcdc; border-bottom: 1px solid #c4c4c4; }
.etabs button { display: flex; align-items: center; gap: 8px; width: 212px; padding-left: 13px; border-right: 1px solid #c4c4c4; font-size: 17px; }
.etabs .home { width: 101px; padding-left: 12px; gap: 7px; background: #efeeef; font-size: 16px; }
.etabs span { color: #111; margin-right: -8px; }
.homeic { width: 22px; height: 18px; color: #4a6fe0; }
.green { color: #1c6b2c; }
.hruler { grid-column: 1 / 3; width: 100%; height: 25px; }
.vruler { width: 24px; height: 100%; overflow: hidden; }
.hruler line, .vruler line { stroke: #222; }
.hruler text, .vruler text { font: 15px "DejaVu Sans Mono", monospace; fill: #333; }
.stage { position: relative; margin-right: 1px; overflow: hidden; background: #000; }
.canvas { position: absolute; inset: 0; width: 100%; height: 100%; }
.net { font-family: "Liberation Mono", monospace; fill: #ffd3c2; }
.pad { fill: #d2d2d2; }
.hot { fill: #f2f2f2; }
.n36 { font-size: 36px; }
.n32 { font-size: 32px; }
.n20 { font-size: 20px; }
.n16 { font-size: 16px; }
.caption { position: absolute; left: 387px; bottom: 101px; padding: 0 5px 4px; background: #fff; color: #000; font: 500 74px/75px "Noto Sans CJK SC", sans-serif; white-space: nowrap; }

/* layer panel */
.layers { background: #fff; overflow: hidden; min-height: 0; }
.lhead { display: flex; align-items: center; height: 44px; padding: 4px 9px 0 14px; }
.preset { width: 180px; }
.lhead .pick { height: 29px; }
.reset { width: 61px; height: 29px; margin-left: 7px; border: 1px solid #ccc; }
.mgr { margin-left: auto; }
.ltabs { display: flex; height: 32px; align-items: center; padding-left: 7px; }
.ltabs button { padding: 0 16px; border-left: 1px solid #ccc; }
.ltabs button:first-child { border: 0; }
.llist li { display: flex; align-items: center; height: 32px; }
.llist .lk { margin: 6px 20px 0 auto; color: #666; }
.llist .lk svg { stroke-width: 1.5; }
.llist .lk.locked { color: #1668ad; }
.llist .ey { margin-right: 11px; color: #111; }
.llist .off { color: #b5b5b5; }
.llist .ey.off svg { stroke-width: 1.5; }
.sw { display: grid; place-items: center; width: 47px; height: 32px; margin-right: 10px; }
.tg { width: 33px; height: 11px; background: linear-gradient(135deg, transparent 50%, #c4c4c4 50%) 8px 0 / 11px 11px no-repeat; }
.tg.none { background: none; }
.llist .cur { background: #f9e8d9; }
.pen { width: 22px; height: 22px; }
.status { grid-column: 6 / 8; grid-row: 2; background: #efefef; border-left: 1px solid #ccc; }
.status div { display: grid; grid-template-columns: 36px 144px 36px 1fr; column-gap: 13px; height: 32px; align-items: center; border-top: 1px solid #c4c4c4; }
.status dt { text-align: right; }
.status dt:nth-of-type(2) { margin-right: -14px; }
.status dd:last-child { padding-left: 14px; }
.tv { position: absolute; right: 53px; bottom: 110px; width: 90px; height: 84px; opacity: .8; filter: drop-shadow(0 1px 2px #777); }
.play { fill: #fff; stroke: #aaa; stroke-width: 1.5; }

/* bottom dock */
.hsplit { height: 9px; background: radial-gradient(circle, #999 1px, transparent 1px) 0 0 / 5px 4px #dcdcdc; }
.hsplit i { display: block; width: 68px; height: 7px; margin: 0 auto; border: 2px solid #444; background: #fff; }
.bottom { display: flex; height: 42px; }
.bottom button { width: 95px; height: 34px; margin-top: 1px; border: 1px solid #c4c4c4; border-right: 0; display: flex; align-items: center; justify-content: center; gap: 3px; }
.bottom .pinbtn { width: 44px; padding-left: 7px; height: 34px; }
.bottom .wide { width: 114px; border-right: 1px solid #c4c4c4; }
.bottom .on { border-color: #fff; font-size: 17px; }
.log i { width: 16px; height: 16px; border-radius: 50%; background: #f51400; }
.bottom .log { padding-right: 14px; }
.edge { height: 3px; background: linear-gradient(#bbb, #bbb) 64px 0 / 384px 3px no-repeat #333; }
```
FILE: script.js
```js
const icon = (id, cls = 's20') => `<svg class="ic ${cls}"><use href="#${id}"/></svg>`;

// net tree: [level, expander, label, icon, has add button]
const pair = n => [1, '+', n];
const tree = [
  [0, '+', '网络 (67)', 'net'],
  [0, '', '网络类 (0)', 'netclass', true],
  [0, '+', '飞线 (1)', 'eyeoff'],
  [0, '-', '差分对 (15)', 'pair', true],
  pair('DP'), pair('HP1'), [1, '-', 'HP2'],
  [2, '', 'VL_HP2- (1971mil)'], [2, '', 'VL_HP2+ (1967.1mil)'],
  pair('HP3'), pair('HP4'),
  ...[0, 1, 2, 3, 4].map(n => pair('SSRX' + n)),
  ...[0, 1, 2, 3, 4].map(n => pair('SSTX' + n)),
  [0, '', '等长网络组 (0)', 'wave', true],
  [0, '', '焊盘对组 (0)', 'wave', true],
];
document.getElementById('tree').innerHTML = tree.map(([lv, ex, label, ic, add]) => {
  const exp = ex ? `<button class="${ex === '+' ? 'plus' : ''}" aria-label="展开"></button>` : '';
  const mark = ic ? icon(ic, 'ti' + (ic === 'eyeoff' ? ' faint' : '')) : '<i class="sq"></i>';
  const end = lv === 0 ? icon('sync', 'rs') : lv === 1 ? icon('down', 'go') : '';
  const btn = add ? `<button class="addb" aria-label="新增">${icon('add')}</button>` : '';
  return `<li class="l${lv}"><span class="exp">${exp}</span>${mark}<span>${label}</span>${end}${btn}</li>`;
}).join('');

// layer list: [label, colour or null for a group, visible, locked]
const layers = [
  ['全部', null, 0], ['顶面', null, 1],
  ['1 顶层', '#ff1400', 1], ['3 顶层丝印层', '#ffc800', 1], ['5 顶层阻焊层', '#850a85', 1], ['7 顶层锡膏层', '#828282', 1], ['9 顶层装配层', '#25bb9b', 1],
  ['底面', null, 1],
  ['2 底层', '#0000ff', 1], ['4 底层丝印层', '#5dba29', 1], ['6 底层阻焊层', '#b41aff', 1], ['8 底层锡膏层', '#860000', 1], ['10 底层装配层', '#5564ff', 1],
  ['内层', null, 1],
  ['15 内层1', '#999966', 1], ['16 内层2', '#006e00', 1],
  ['其他', null, 1],
  ['11 板框层', '#ff23ff', 1], ['12 多层', '#c2c2c2', 1], ['13 文档层', '#ffffff', 1], ['14 机械层', '#fc42f3', 1], ['56 钻孔图层', '#037586', 1], ['57 飞线层', '#626eff', 1, 1],
  ['元件', null, 0],
  ['48 元件外形层', '#00b9d1', 0], ['49 元件标识层', '#60f0d0', 0], ['50 引脚焊接层', '#ce9c98', 0], ['51 引脚悬空层', '#ffa8ff', 0],
  ['3D外壳', null, 1],
  ['53 边框层', '#60eb9c', 1], ['54 顶层', '#ffd0ff', 1], ['55 底层', '#0060d4', 1],
];
const pen = '<svg class="pen" viewBox="0 0 22 22"><path d="M1 21l3-8L15 2l5 5L9 18z" fill="#f5a81c"/><path d="M1 21l3-8 5 5z" fill="#ffe3b0"/><path d="M14 3l2-2q4 0 5 4l-2 3z" fill="#f08a84"/></svg>';
document.getElementById('layer-list').innerHTML = layers.map(([label, col, on, locked], i) => {
  const head = col ? `<i class="sw" style="background:${col}">${i === 2 ? pen : ''}</i>` : `<i class="${i ? 'tg' : 'tg none'}"></i>`;
  return `<li class="${i === 2 ? 'cur' : ''}">${head}<button class="ey ${on ? '' : 'off'}" aria-label="显示">${icon(on ? 'eye' : 'eyeoff', 's22')}</button><span>${label}</span><button class="lk ${locked ? 'locked' : ''}" aria-label="锁定">${icon(locked ? 'lock' : 'unlock', 's22')}</button></li>`;
}).join('');

// rulers: one tick every 5mil, longer at 25 and labelled at 50
const step = 26.53;
const marks = (n, draw) => { for (let i = -9; i < n; i++) draw(i, ((i % 10) + 10) % 10); };
let h = '';
marks(200, (i, m) => {
  const x = 66 + i * step;
  if (x < 24) return;
  h += `<line x1="${x}" x2="${x}" y1="${m === 0 ? 0 : m === 5 ? 12 : 18}" y2="24"/>`;
  if (m === 0) h += `<text x="${x + 1}" y="17">${1350 + i * 5}</text>`;
});
document.getElementById('hruler').innerHTML = h + '<line x1="910" x2="910" y1="0" y2="24"/>';
let v = '';
marks(120, (i, m) => {
  const y = 256 + i * step;
  v += `<line y1="${y}" y2="${y}" x1="${m === 0 ? 0 : m === 5 ? 11 : 17}" x2="23"/>`;
  if (m === 0) v += `<text transform="translate(13 ${y - 1}) rotate(-90)">${600 - i * 5}</text>`;
});
document.getElementById('vruler').innerHTML = v + '<line x1="0" x2="23" y1="879" y2="879"/>';
```
